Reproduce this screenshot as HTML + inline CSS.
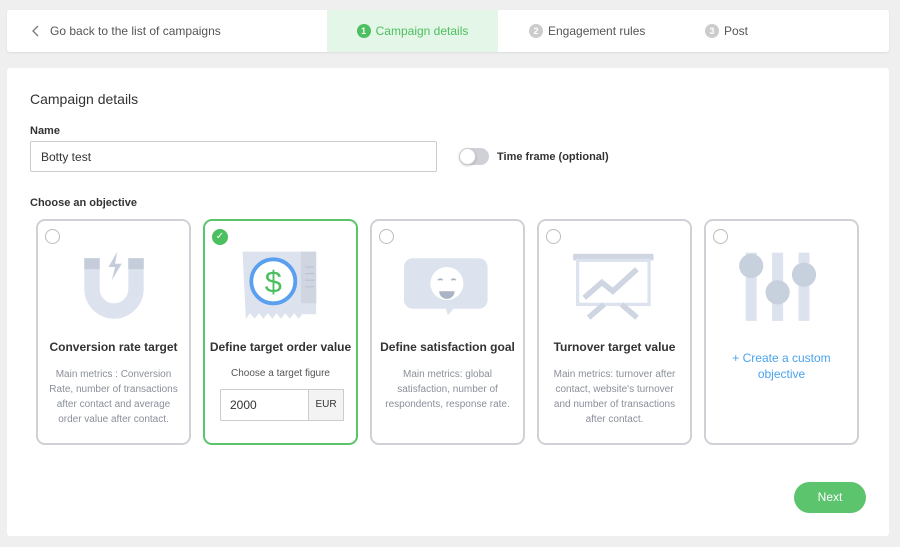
<!DOCTYPE html>
<html><head><style>
*{box-sizing:border-box;margin:0;padding:0}
body{width:900px;height:547px;background:#efefef;font-family:"Liberation Sans",sans-serif;position:relative;overflow:hidden;color:#333}
.abs{position:absolute}
.top{left:7px;top:10px;width:882px;height:42px;background:#fff;border-radius:3px;box-shadow:0 1px 2px rgba(0,0,0,.08)}
.tab{top:0;height:42px;display:flex;align-items:center;font-size:12px;color:#555}
.num{width:14px;height:14px;border-radius:50%;background:#ccc;color:#fff;font-size:9px;display:inline-flex;align-items:center;justify-content:center;margin-right:5px;font-weight:bold}
.panel{left:7px;top:68px;width:882px;height:468px;background:#fff;border-radius:3px}
.card{top:219px;width:155px;height:226px;border:2px solid #cfd1d6;border-radius:9px;background:#fff;text-align:center}
.card .rad{position:absolute;left:7px;top:8px;width:15px;height:15px;border:1px solid #bbb;border-radius:50%}
.card h4{position:absolute;top:119px;left:0;right:0;font-size:12px;font-weight:bold;color:#333}
.card p{position:absolute;top:146px;left:10px;right:10px;font-size:10px;line-height:15px;color:#8a8f99}
.card svg{position:absolute;left:32px;top:24px}
</style></head><body>
<div class="abs top">
 <div class="abs tab" style="left:24px"><svg width="10" height="12" viewBox="0 0 10 12" style="margin-right:9px"><path d="M7 1L2 6l5 5" fill="none" stroke="#777" stroke-width="1.3"/></svg>Go back to the list of campaigns</div>
 <div class="abs tab" style="left:320px;width:171px;background:#e4f6e7;justify-content:center;color:#4cbf5e"><span class="num" style="background:#4cbf5e">1</span>Campaign details</div>
 <div class="abs tab" style="left:522px"><span class="num">2</span>Engagement rules</div>
 <div class="abs tab" style="left:698px"><span class="num">3</span>Post</div>
</div>
<div class="abs panel"></div>
<div class="abs" style="left:30px;top:91px;font-size:14px;color:#333">Campaign details</div>
<div class="abs" style="left:30px;top:125px;font-size:11px;font-weight:bold;color:#333">Name</div>
<div class="abs" style="left:30px;top:141px;width:407px;height:31px;border:1px solid #ccc;border-radius:2px;font-size:12px;padding:8px 10px;color:#333">Botty test</div>
<div class="abs" style="left:459px;top:148px;width:30px;height:17px;border-radius:9px;background:#cfd1d6"></div>
<div class="abs" style="left:459px;top:148px;width:17px;height:17px;border-radius:50%;background:#fff;border:1px solid #ccc;box-shadow:0 1px 2px rgba(0,0,0,.2)"></div>
<div class="abs" style="left:497px;top:151px;font-size:11px;font-weight:bold;color:#333">Time frame (optional)</div>
<div class="abs" style="left:30px;top:197px;font-size:11px;font-weight:bold;color:#333">Choose an objective</div>

<div class="abs card" style="left:36px"><div class="rad"></div>
<svg width="88" height="77" viewBox="0 0 80 70"><path d="M13 12h14v28a13 13 0 0 0 26 0V12h14v28a27 27 0 0 1-54 0z" fill="#dde3ee"/><rect x="13" y="12" width="14" height="10" fill="#c5cdda"/><rect x="53" y="12" width="14" height="10" fill="#c5cdda"/><path d="M43 6l-8 14h6l-3 12 9-15h-6z" fill="#c5cdda"/></svg>
<h4>Conversion rate target</h4><p>Main metrics : Conversion Rate, number of transactions after contact and average order value after contact.</p></div>

<div class="abs card" style="left:203px;border-color:#5cc46d"><div class="abs" style="left:7px;top:8px;width:16px;height:16px;border-radius:50%;background:#4cbf5e;color:#fff;font-size:10px;line-height:16px">✓</div>
<svg width="88" height="77" viewBox="0 0 80 70"><path d="M5 6h60a7 7 0 0 1 7 7v50H60V62l-4 5-4-5-4 5-4-5-4 5-4-5-4 5-4-5-4 5-4-5-4 5-4-5-4 5z" fill="#dde3ee"/><rect x="58" y="6" width="14" height="47" fill="#cfd6e2"/><g stroke="#b9c2d1"><line x1="62" y1="20" x2="70" y2="20"/><line x1="62" y1="26" x2="70" y2="26"/><line x1="62" y1="32" x2="70" y2="32"/><line x1="62" y1="38" x2="70" y2="38"/></g><circle cx="33" cy="33" r="20" fill="#fff" stroke="#5aa0ef" stroke-width="3.5"/><text x="33" y="43" text-anchor="middle" font-size="28" fill="#4cbf5e" font-family="Liberation Sans">$</text></svg>
<h4>Define target order value</h4>
<div class="abs" style="left:0;right:0;top:147px;font-size:10px;color:#555">Choose a target figure</div>
<div class="abs" style="left:15px;top:168px;width:124px;height:32px;border:1px solid #ccc;border-radius:2px;font-size:12px;padding:8px 9px;text-align:left">2000</div>
<div class="abs" style="left:103px;top:168px;width:36px;height:32px;border:1px solid #ccc;background:#f3f3f3;font-size:10px;line-height:30px">EUR</div></div>

<div class="abs card" style="left:370px"><div class="rad"></div>
<svg width="88" height="77" viewBox="0 0 80 70"><path d="M8 12h60a8 8 0 0 1 8 8v30a8 8 0 0 1-8 8H45l-5 6-2-6H8a8 8 0 0 1-8-8V20a8 8 0 0 1 8-8z" fill="#dde3ee"/><circle cx="39" cy="35" r="15" fill="#fff"/><path d="M32 42a7 7 0 0 0 14 0z" fill="#aab4c4"/><path d="M31 32q2-2 4 0M43 32q2-2 4 0" stroke="#aab4c4" fill="none" stroke-width="1.5"/></svg>
<h4>Define satisfaction goal</h4><p>Main metrics: global satisfaction, number of respondents, response rate.</p></div>

<div class="abs card" style="left:537px"><div class="rad"></div>
<svg width="88" height="77" viewBox="0 0 80 70"><rect x="2" y="8" width="73" height="6" fill="#cfd6e2"/><rect x="6" y="14" width="65" height="40" fill="none" stroke="#dde3ee" stroke-width="3"/><path d="M12 48l16-14 10 8 22-20" stroke="#cfd6e2" stroke-width="5" fill="none"/><path d="M16 66l14-12M60 66l-14-12" stroke="#cfd6e2" stroke-width="5"/></svg>
<h4>Turnover target value</h4><p>Main metrics: turnover after contact, website's turnover and number of transactions after contact.</p></div>

<div class="abs card" style="left:704px"><div class="rad"></div>
<svg width="88" height="77" viewBox="0 0 80 70"><rect x="7" y="7" width="10" height="62" fill="#dde3ee"/><rect x="31" y="7" width="10" height="62" fill="#dde3ee"/><rect x="55" y="7" width="10" height="62" fill="#dde3ee"/><circle cx="12" cy="19" r="11" fill="#c7d0dd"/><circle cx="36" cy="43" r="11" fill="#c7d0dd"/><circle cx="60" cy="27" r="11" fill="#c7d0dd"/></svg>
<div class="abs" style="left:0;right:0;top:129px;font-size:12px;line-height:16px;color:#4aa3ef">+ Create a custom<br>objective</div></div>

<div class="abs" style="left:794px;top:482px;width:72px;height:31px;border-radius:16px;background:#5cc46d;color:#fff;font-size:12px;text-align:center;line-height:31px">Next</div>
</body></html>
